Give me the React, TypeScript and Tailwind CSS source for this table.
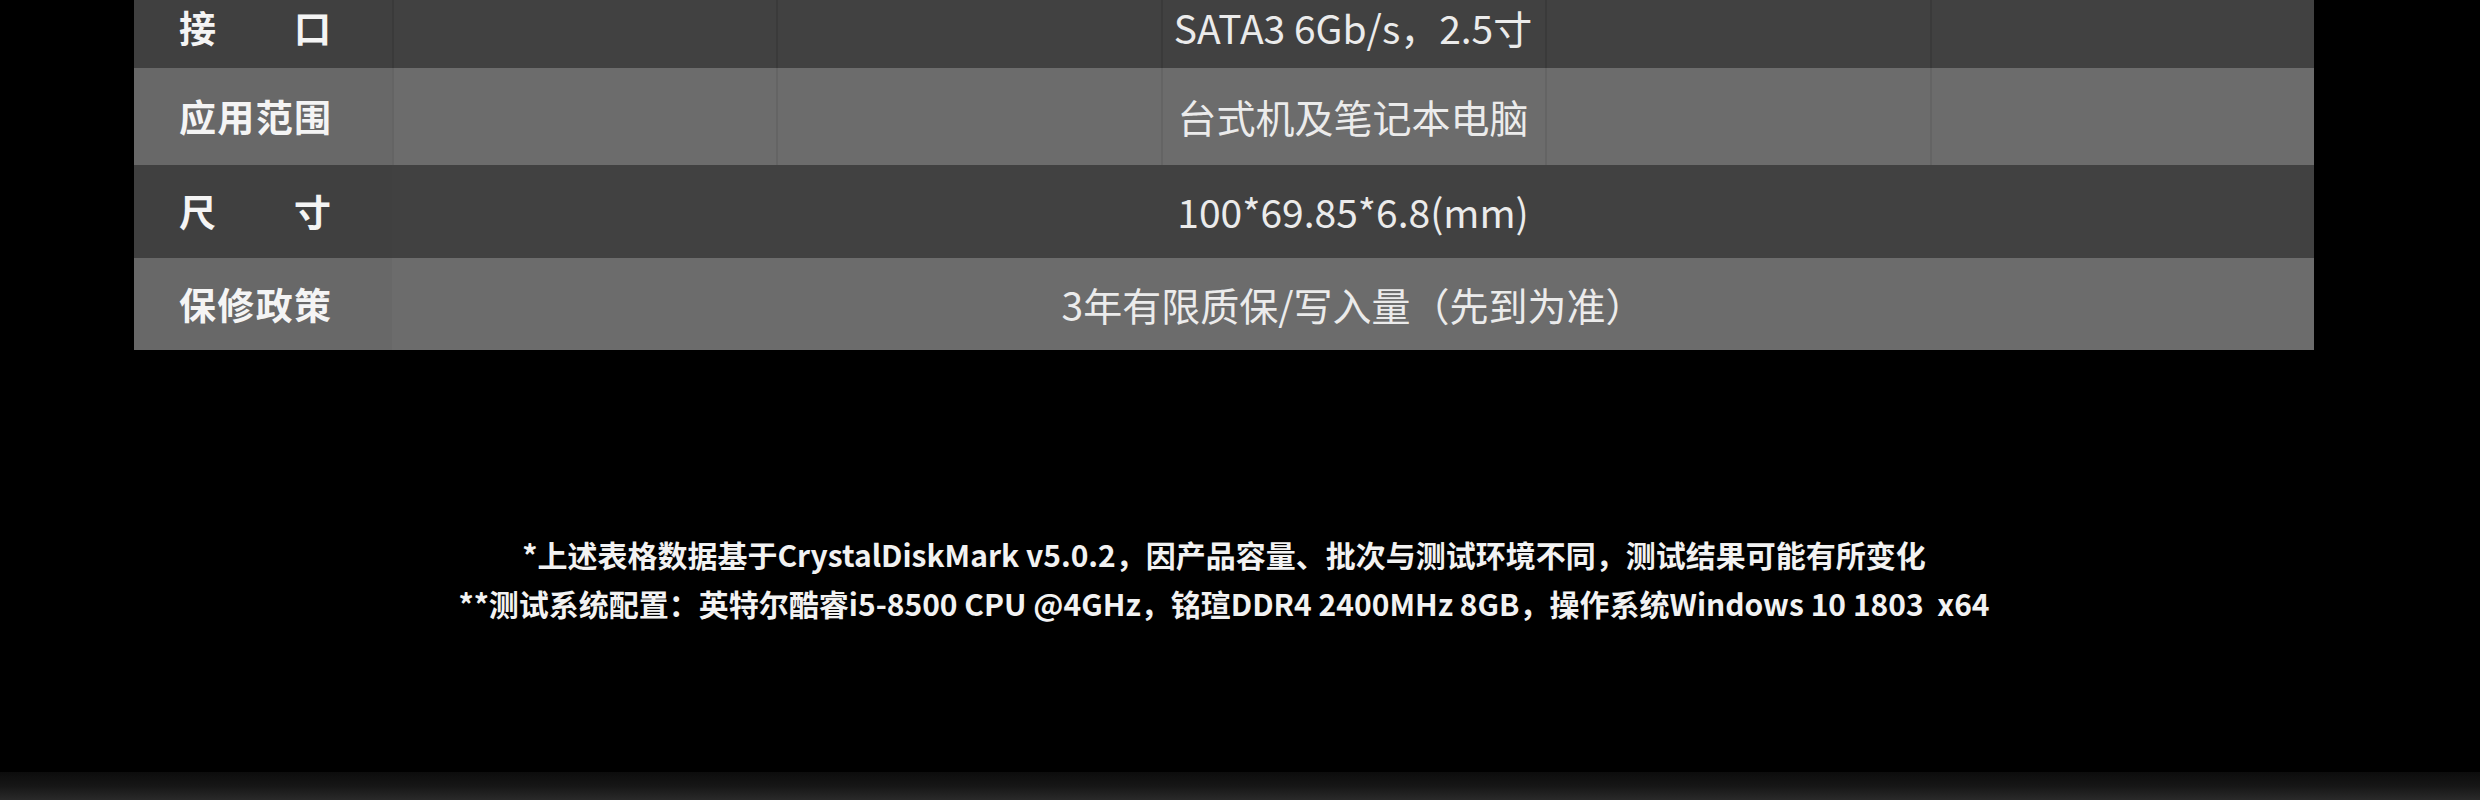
const specRows = [
    { label: "接口", value: "SATA3 6Gb/s，2.5寸", dark: true, lines: true, h: "h-[68px] pb-[14px]" },
    { label: "应用范围", value: "台式机及笔记本电脑", dark: false, lines: true, h: "h-[97px]" },
    { label: "尺寸", value: "100*69.85*6.8(mm)", dark: true, lines: false, h: "h-[93px]" },
    { label: "保修政策", value: "3年有限质保/写入量（先到为准）", dark: false, lines: false, h: "h-[92px]" },
];

const SpecTable = () => {
    return (
        <div className="flex flex-col">
            {specRows.map((row) => (
                <div
                    key={row.label}
                    className={`grid grid-cols-[258px_1fr] ${row.h.split(" ")[0]} ${row.dark ? "bg-[#414141]" : "bg-[#6c6c6c]"}`}
                >
                    <div className={`flex items-center pl-[45px] ${row.h} ${row.dark ? "bg-[#404040]" : "bg-[#686868]"}`}>
                        <div className="flex justify-between w-[152px] text-[37px] font-bold text-[#f4f4f4] leading-none">
                            {row.label.split("").map((ch, i) => (
                                <span key={i}>{ch}</span>
                            ))}
                        </div>
                    </div>
                    <div className="grid grid-cols-5">
                        {[0, 1, 2, 3, 4].map((i) => (
                            <div
                                key={i}
                                className={`row-start-1 ${row.lines ? (row.dark ? "border-l-2 border-[#3a3a3a]" : "border-l-2 border-[#646464]") : ""}`}
                                style={{ gridColumnStart: i + 1 }}
                            />
                        ))}
                        <div className={`row-start-1 col-span-5 col-start-1 flex items-center justify-center text-[39px] text-[#ebebeb] leading-none ${row.h}`}>
                            {row.value}
                        </div>
                    </div>
                </div>
            ))}
        </div>
    );
};

const App = () => {
    return (
        <div className="w-[2480px] h-[800px] bg-black overflow-hidden flex flex-col font-['Noto_Sans_CJK_SC','Noto_Sans',sans-serif]">
            <div className="mx-[134px] w-[2180px]">
                <SpecTable />
                <div className="mt-[180px] flex flex-col items-center text-[30px] leading-[49px] font-bold text-[#f2f2f2]">
                    <p>*上述表格数据基于CrystalDiskMark v5.0.2，因产品容量、批次与测试环境不同，测试结果可能有所变化</p>
                    <p>**测试系统配置：英特尔酷睿i5-8500 CPU @4GHz，铭瑄DDR4 2400MHz 8GB，操作系统Windows 10 1803&nbsp;&nbsp;x64</p>
                </div>
            </div>
            <div className="flex-1" />
            <div className="h-[28px] bg-gradient-to-b from-[#0c0c0c] via-[#161616] to-[#2a2a2a]" />
        </div>
    );
};

export default App;
